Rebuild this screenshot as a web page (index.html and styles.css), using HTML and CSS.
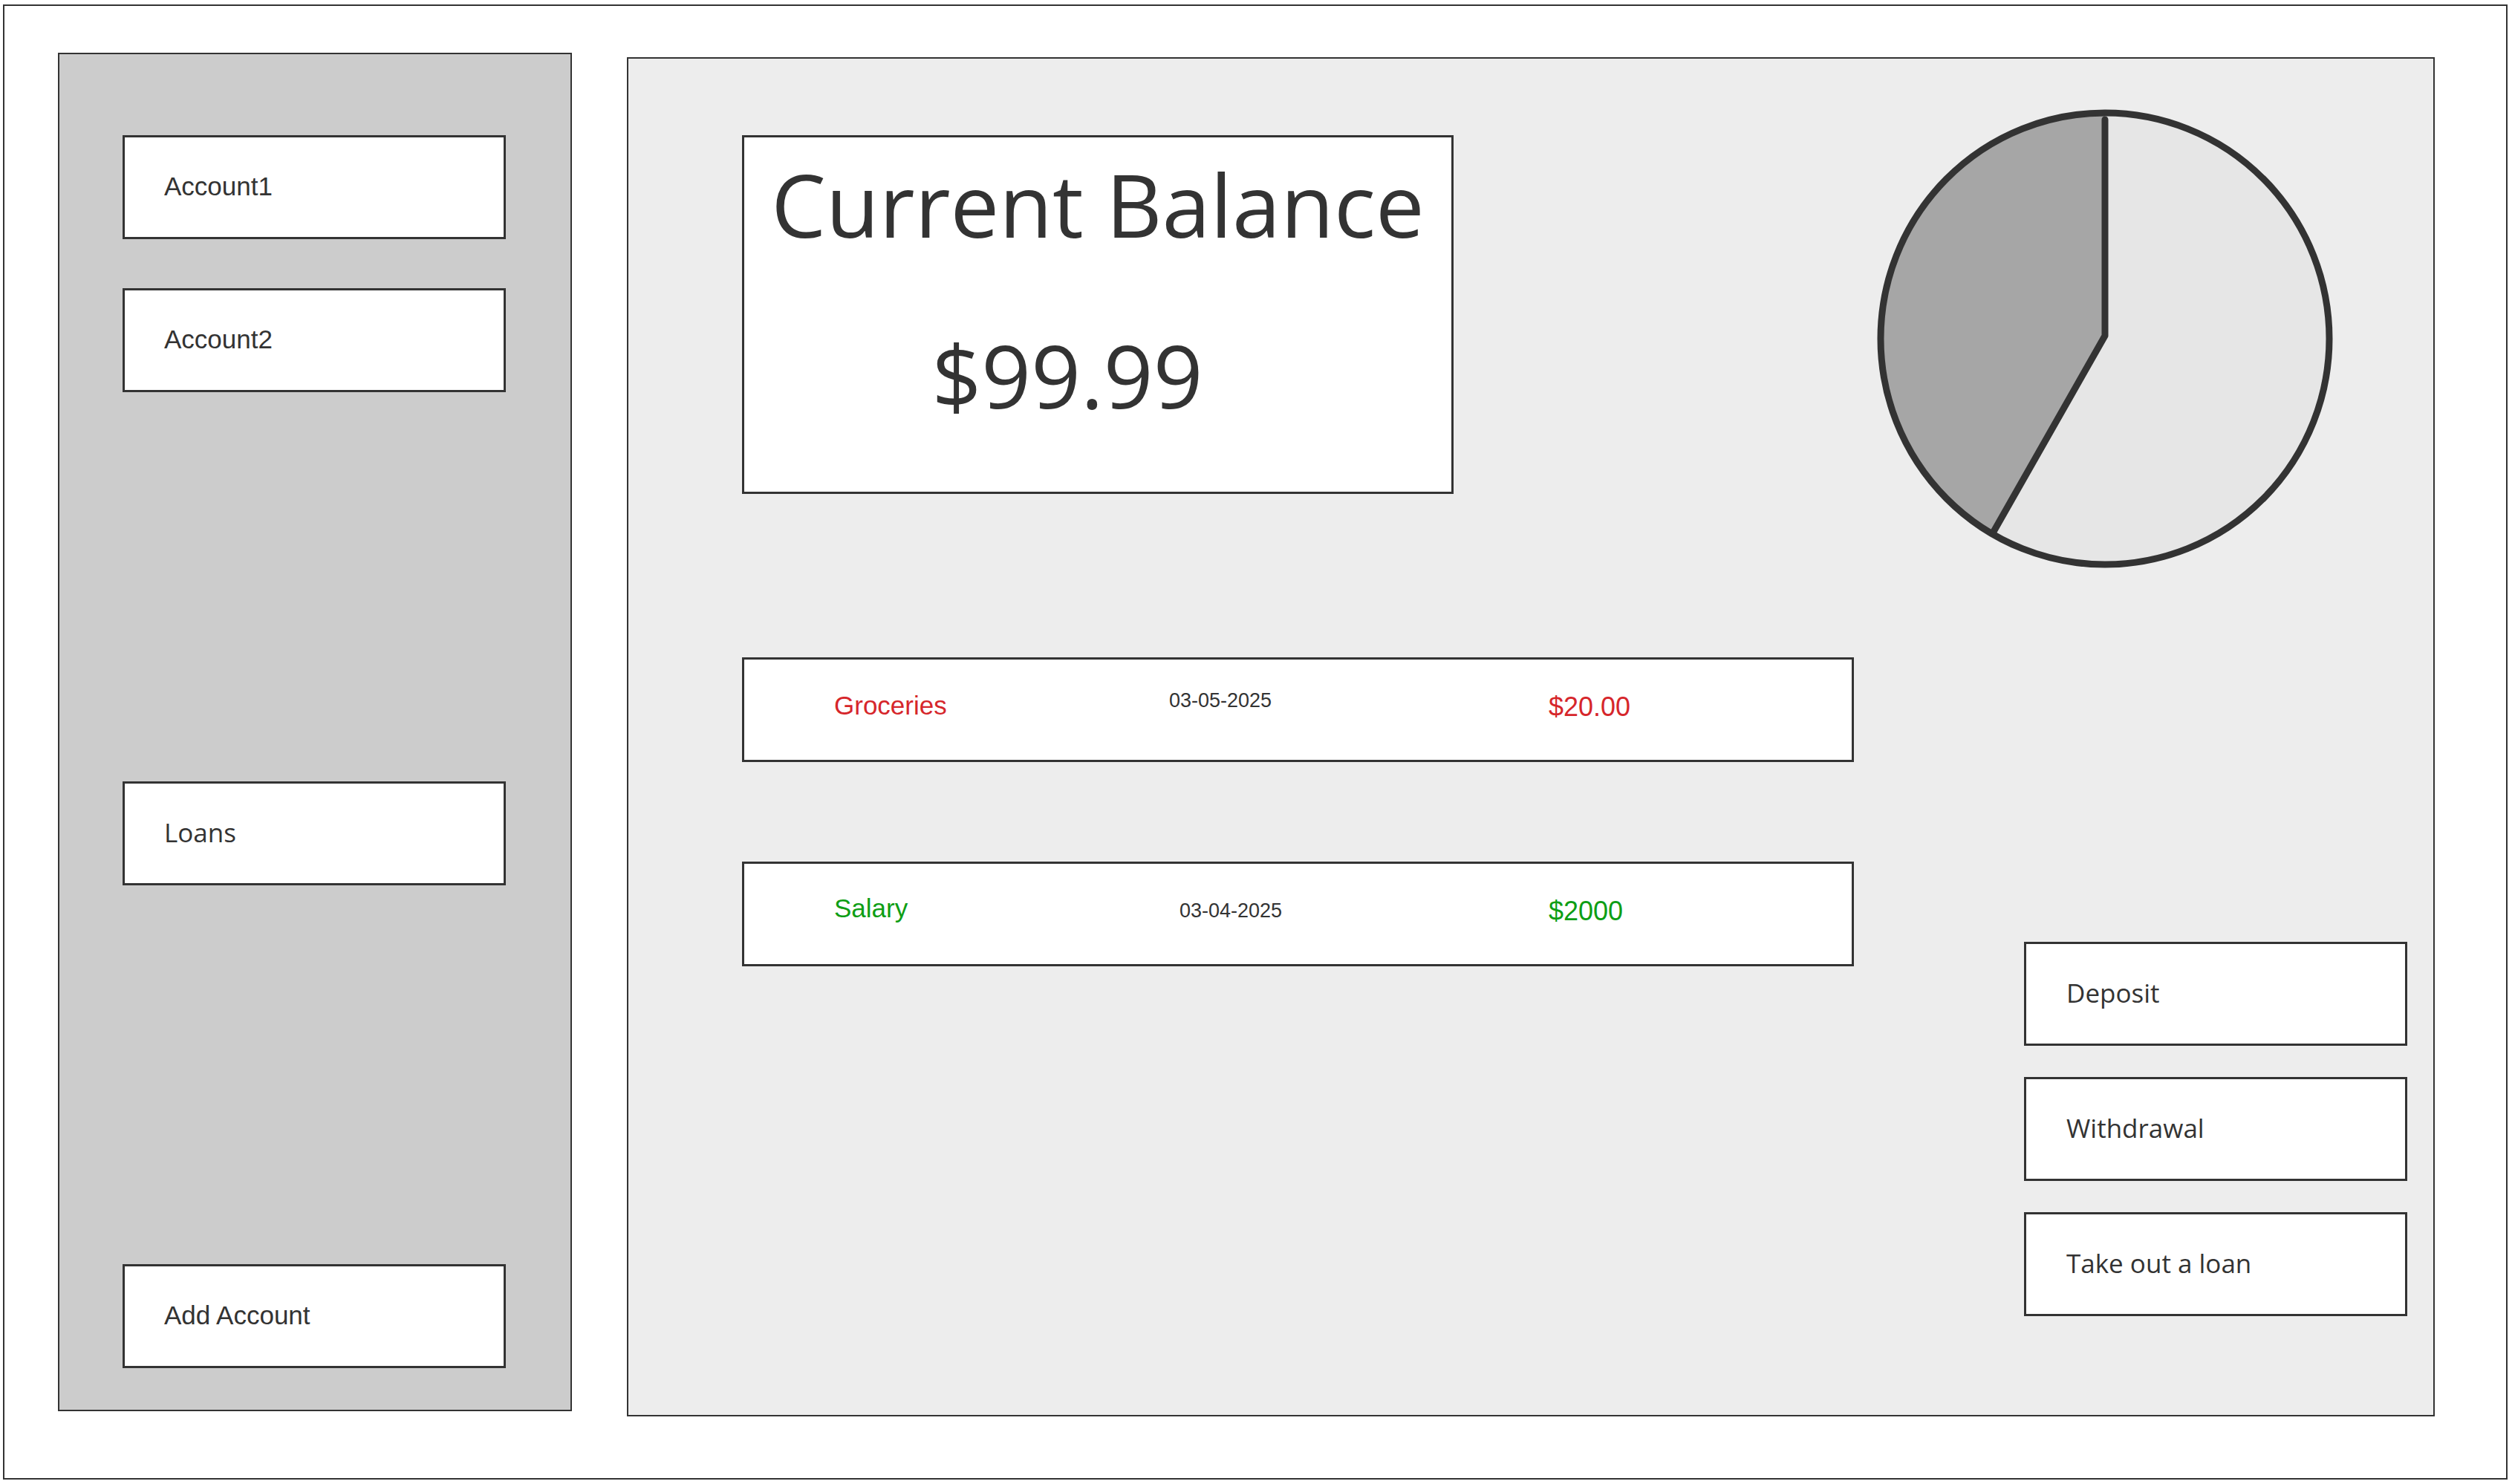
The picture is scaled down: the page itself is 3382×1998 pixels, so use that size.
FILE: index.html
```html
<!DOCTYPE html>
<html lang="en">
<head>
<meta charset="utf-8">
<title>Bank Dashboard Wireframe</title>
<link rel="stylesheet" href="styles.css">
</head>
<body>
<div class="frame">
  <aside class="sidebar">
    <div class="btn side-btn helv">Account1</div>
    <div class="btn side-btn helv gap-sm">Account2</div>
    <div class="btn side-btn round loans">Loans</div>
    <div class="btn side-btn helv add">Add Account</div>
  </aside>
  <main class="main">
    <section class="left-col">
      <div class="balance">
        <div class="balance-title">Current Balance</div>
        <div class="balance-amount">$99.99</div>
      </div>
      <div class="txn txn-first">
        <span class="t-name neg">Groceries</span>
        <span class="t-date">03-05-2025</span>
        <span class="t-amt neg">$20.00</span>
      </div>
      <div class="txn txn-second">
        <span class="t-name pos">Salary</span>
        <span class="t-date">03-04-2025</span>
        <span class="t-amt pos">$2000</span>
      </div>
    </section>
    <section class="right-col">
      <svg class="pie" width="614" height="618" viewBox="0 0 614 618">
        <path d="M307 309 L307 8 A301 301 0 1 1 156.5 569.7 Z" fill="#e6e6e6"/>
        <path d="M307 309 L156.5 569.7 A301 301 0 0 1 307 8 Z" fill="#a6a6a6"/>
        <ellipse cx="307" cy="309" rx="302" ry="304" fill="none" stroke="#333" stroke-width="9"/>
        <path d="M307 14 L307 305 L156.5 569.7" fill="none" stroke="#333" stroke-width="9" stroke-linecap="round" stroke-linejoin="round"/>
      </svg>
      <div class="actions">
        <div class="btn act-btn round">Deposit</div>
        <div class="btn act-btn round">Withdrawal</div>
        <div class="btn act-btn round">Take out a loan</div>
      </div>
    </section>
  </main>
</div>
</body>
</html>
```

FILE: styles.css
```css
html, body {
  margin: 0;
  padding: 0;
  background: #ffffff;
}

body {
  width: 3382px;
  height: 1998px;
  overflow: hidden;
  color: #333333;
  font-family: "Liberation Sans", Arial, sans-serif;
}

.frame {
  box-sizing: border-box;
  width: 3372px;
  height: 1986px;
  margin: 6px 0 0 4px;
  border: 2px solid #333333;
  display: flex;
  align-items: flex-start;
  gap: 74px;
  padding: 63px 0 0 72px;
}

/* ---------- sidebar ---------- */
.sidebar {
  box-sizing: border-box;
  width: 692px;
  height: 1829px;
  flex: none;
  background: #cccccc;
  border: 2px solid #333333;
  display: flex;
  flex-direction: column;
  padding: 109px 0 56px 85px;
}

.btn {
  box-sizing: border-box;
  width: 516px;
  height: 140px;
  background: #ffffff;
  border: 3px solid #333333;
  display: flex;
  align-items: center;
  line-height: 1;
  color: #333333;
}

.side-btn {
  padding: 0 0 4px 53px;
}

.helv {
  font-family: "Liberation Sans", Arial, sans-serif;
  font-size: 35px;
}

.round {
  font-family: "Open Sans", "Noto Sans", sans-serif;
  font-size: 35px;
  font-weight: 500;
}

.gap-sm {
  margin-top: 66px;
}

.loans {
  margin-top: 524px;
}

.add {
  margin-top: auto;
}

/* ---------- main panel ---------- */
.main {
  box-sizing: border-box;
  width: 2434px;
  height: 1830px;
  flex: none;
  margin-top: 6px;
  background: #ededed;
  border: 2px solid #333333;
  display: flex;
  align-items: flex-start;
  gap: 31px;
  padding-left: 153px;
}

.left-col {
  width: 1497px;
  margin-top: 103px;
  display: flex;
  flex-direction: column;
  align-items: flex-start;
}

.balance {
  box-sizing: border-box;
  width: 958px;
  height: 483px;
  background: #ffffff;
  border: 3px solid #333333;
  display: flex;
  flex-direction: column;
  align-items: center;
  padding-top: 31px;
  font-family: "Open Sans", "Noto Sans", sans-serif;
  font-size: 117px;
  font-weight: 500;
  line-height: 1;
  color: #333333;
}

.balance-title {
  white-space: nowrap;
}

.balance-amount {
  margin-top: 113px;
  margin-right: 82px;
}

.txn {
  box-sizing: border-box;
  width: 1497px;
  height: 141px;
  background: #ffffff;
  border: 3px solid #333333;
  display: grid;
  grid-template-columns: 451px 511px auto;
  align-items: start;
  padding-left: 121px;
  line-height: 1;
  font-family: "Liberation Sans", Arial, sans-serif;
}

.txn-first {
  margin-top: 220px;
}

.txn-second {
  margin-top: 134px;
}

.t-name {
  font-size: 35px;
  margin-top: 44px;
}

.t-date {
  font-size: 27px;
  margin-top: 42px;
  color: #333333;
}

.t-amt {
  font-size: 36px;
  margin-top: 46px;
}

.txn-second .t-name {
  margin-top: 42px;
}

.txn-second .t-date {
  margin-top: 50px;
  margin-left: 14px;
}

.neg {
  color: #d6262b;
}

.pos {
  color: #0e9e15;
}

/* ---------- right column ---------- */
.right-col {
  width: 714px;
  margin-top: 68px;
  display: flex;
  flex-direction: column;
  align-items: flex-start;
}

.pie {
  display: block;
}

.actions {
  align-self: flex-end;
  margin-top: 503px;
  display: flex;
  flex-direction: column;
  gap: 42px;
}

.act-btn {
  padding: 0 0 4px 54px;
}
```
